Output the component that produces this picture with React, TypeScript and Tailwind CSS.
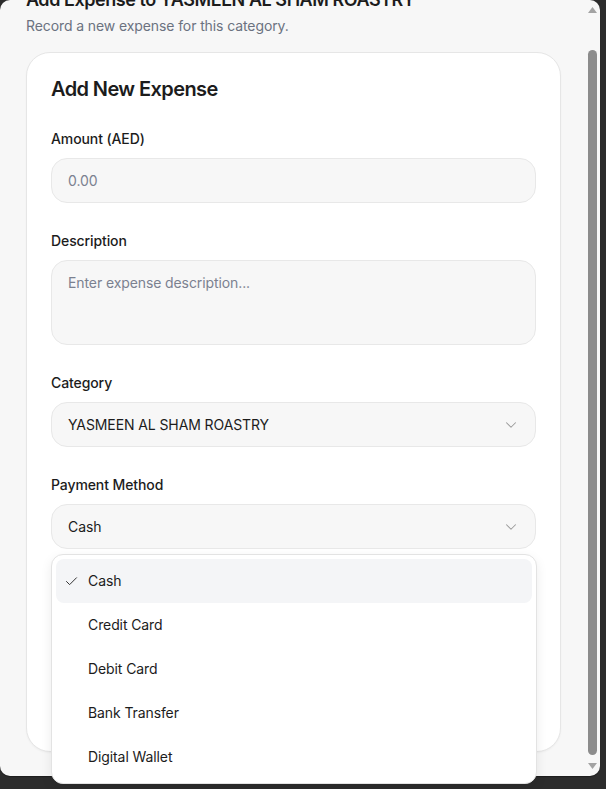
import { Check, ChevronDown } from "lucide-react";

function Label({ children }: { children: React.ReactNode }) {
  return <div className="text-sm font-medium leading-5 text-[#1c1c1c]">{children}</div>;
}

export default function App() {
  const items = ["Cash", "Credit Card", "Debit Card", "Bank Transfer", "Digital Wallet"];
  return (
    <div className="h-[789px] w-[606px] overflow-hidden bg-[#2c2c2c] font-['Inter','Noto_Sans',sans-serif] tracking-[-0.1px]">
      <div className="relative flex h-[776px] w-[600px] rounded-[10px] bg-[#f7f7f7] shadow-[0_1px_1px_rgba(0,0,0,0.35)]">
        <div className="flex-1 pl-[26px] pr-[24px]">
          <div className="-mt-[14px] text-lg font-semibold leading-7 tracking-[-0.45px] text-[#1c1c1c]">
            Add Expense to YASMEEN AL SHAM ROASTRY
          </div>
          <div className="mt-[2px] text-sm leading-5 text-[#6b7280]">Record a new expense for this category.</div>
          <div className="mt-4 h-[700px] rounded-3xl border border-[#e6e6e6] bg-white px-6 pt-[22px] shadow-[0_1px_2px_rgba(0,0,0,0.04)]">
            <div className="text-xl font-semibold leading-7 tracking-[-0.6px] text-[#1c1c1c]">Add New Expense</div>

            <div className="mt-[26px]">
              <Label>Amount (AED)</Label>
              <div className="mt-[9px] flex h-[45px] items-center rounded-2xl border border-[#e8e8e8] bg-[#f7f7f7] px-4 text-sm text-[#7b8190]">
                0.00
              </div>
            </div>

            <div className="mt-[28px]">
              <Label>Description</Label>
              <div className="mt-[9px] h-[85px] rounded-2xl border border-[#e8e8e8] bg-[#f7f7f7] px-4 pt-[12px] text-sm leading-5 text-[#7b8190]">
                Enter expense description...
              </div>
            </div>

            <div className="mt-[28px]">
              <Label>Category</Label>
              <div className="mt-[9px] flex h-[45px] items-center justify-between rounded-2xl border border-[#e8e8e8] bg-[#f7f7f7] pl-4 pr-[15px] text-sm text-[#1c1c1c]">
                <span>YASMEEN AL SHAM ROASTRY</span>
                <ChevronDown size={18} strokeWidth={1.4} className="text-[#9a9a9a]" />
              </div>
            </div>

            <div className="mt-[28px]">
              <Label>Payment Method</Label>
              <div className="relative mt-[9px]">
                <div className="flex h-[45px] items-center justify-between rounded-2xl border border-[#e8e8e8] bg-[#f7f7f7] pl-4 pr-[15px] text-sm text-[#1c1c1c]">
                  <span>Cash</span>
                  <ChevronDown size={18} strokeWidth={1.4} className="text-[#9a9a9a]" />
                </div>
                <div className="absolute left-0 top-[50px] z-10 w-[486px] rounded-xl border border-[#e3e3e3] bg-white p-1 shadow-[0_4px_12px_rgba(0,0,0,0.08)]">
                  {items.map((it, i) => (
                    <div
                      key={it}
                      className={
                        "relative flex h-11 items-center rounded-lg pl-8 text-sm text-[#1c1c1c] " +
                        (i === 0 ? "bg-[#f4f5f7]" : "")
                      }
                    >
                      {i === 0 && (
                        <Check size={15} strokeWidth={1.6} className="absolute left-2 text-[#333]" />
                      )}
                      {it}
                    </div>
                  ))}
                </div>
              </div>
            </div>
          </div>
        </div>

        <div className="flex w-[15px] flex-col items-center py-[7px]">
          <svg width="9" height="6" viewBox="0 0 9 6">
            <polygon points="4.5,0 9,6 0,6" fill="#a3a3a3" />
          </svg>
          <div className="mt-[37px] w-[9px] flex-1 rounded-full bg-[#8c8c8c]" />
          <svg width="9" height="6" viewBox="0 0 9 6" className="mt-[8px]">
            <polygon points="0,0 9,0 4.5,6" fill="#a3a3a3" />
          </svg>
        </div>
      </div>
    </div>
  );
}
